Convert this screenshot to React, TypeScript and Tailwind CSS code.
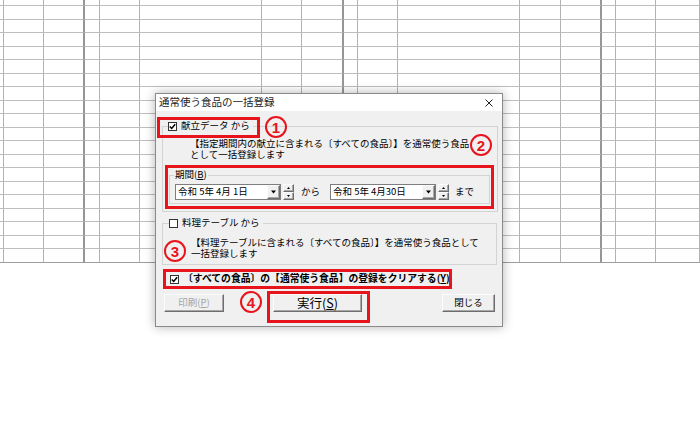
import React from "react";

// spreadsheet behind the dialog
const colCount = 16;
const thickCols = [2, 7, 12];
const rowCount = 20;

const raised =
  "bg-[#f0f0f0] border border-t-[#fbfbfb] border-l-[#fbfbfb] border-r-[#6d6d6d] border-b-[#6d6d6d] shadow-[inset_-1px_-1px_0_#a8a8a8]";

function Sheet() {
  const cells = [];
  for (let r = 0; r < rowCount; r++) {
    for (let c = 0; c < colCount; c++) {
      const side = thickCols.includes(c)
        ? "border-r-2 border-r-[#969696]"
        : "border-r border-r-[#b3b3b3]";
      const bottom =
        r === rowCount - 1 ? "border-b border-b-[#9c9c9c]" : "border-b border-b-[#bdbdbd]";
      cells.push(<div key={`${r}-${c}`} className={`${side} ${bottom}`} />);
    }
  }
  return (
    <div className="grid grid-cols-[4px_40px_41px_15px_40px_122px_40px_42px_14px_40px_122px_41px_41px_14px_40px_44px] grid-rows-[6px_repeat(9,14px_13px)_14px]">
      {cells}
    </div>
  );
}

function Check({ checked }: { checked?: boolean }) {
  return (
    <span className="inline-flex h-[9px] w-[9px] shrink-0 items-center justify-center border border-[#333333] bg-white">
      {checked && (
        <svg width="7" height="7" viewBox="0 0 7 7">
          <path d="M0.8 3.4 L2.7 5.4 L6.2 1.2" fill="none" stroke="#000" strokeWidth="1.5" />
        </svg>
      )}
    </span>
  );
}

function DateCombo({ value }: { value: string }) {
  return (
    <span className="flex items-center">
      <span className="flex h-[16px] w-[106px] items-center border border-[#7e7e7e] bg-white">
        <span className="flex-1 whitespace-nowrap pl-[2px]">{value}</span>
        <span className={`flex h-full w-[13px] items-center justify-center ${raised}`}>
          <svg width="5" height="4" viewBox="0 0 5 4">
            <path d="M0 0.5 H5 L2.5 3.5 Z" fill="#000" />
          </svg>
        </span>
      </span>
      <span className="ml-[2px] flex h-[16px] w-[11px] flex-col">
        <span className={`flex h-1/2 items-center justify-center ${raised}`}>
          <svg width="3" height="2" viewBox="0 0 3 2">
            <path d="M0 2 H3 L1.5 0 Z" fill="#000" />
          </svg>
        </span>
        <span className={`flex h-1/2 items-center justify-center ${raised}`}>
          <svg width="3" height="2" viewBox="0 0 3 2">
            <path d="M0 0 H3 L1.5 2 Z" fill="#000" />
          </svg>
        </span>
      </span>
    </span>
  );
}

function Badge({ n, className }: { n: string; className: string }) {
  return (
    <span
      className={`absolute flex h-[22px] w-[22px] items-center justify-center rounded-full border-2 border-[#e8141c] font-['Liberation_Sans',Arial,sans-serif] text-[15px] font-bold leading-none text-[#e8141c] ${className}`}
    >
      {n}
    </span>
  );
}

export default function App() {
  return (
    <div className="relative h-[426px] w-[700px] overflow-hidden bg-white font-['Noto_Sans_CJK_JP','Noto_Sans',sans-serif]">
      <Sheet />

      {/* dialog */}
      <div className="absolute left-[155px] top-[93px] flex h-[234px] w-[348px] flex-col border border-[#8a8a8a] bg-[#f0f0f0] text-[9.5px] leading-none text-black shadow-[0_0_10px_rgba(0,0,0,0.3)]">
        <div className="flex h-[17px] shrink-0 items-center justify-between bg-white pl-[3px] pr-[9px] text-[#222]">
          <span className="text-[10.5px]">通常使う食品の一括登録</span>
          <svg width="8" height="8" viewBox="0 0 8 8">
            <path d="M0.5 0.5 L7.5 7.5 M7.5 0.5 L0.5 7.5" stroke="#222" strokeWidth="1" />
          </svg>
        </div>

        <div className="flex flex-col px-[6px]">
          <fieldset className="mt-[9px] w-[336px] border border-[#d3d3d3] pb-[7px]">
            <legend className="ml-[5px] pr-[3px]">
              <span className="flex h-[12px] items-center gap-[4px]">
                <Check checked />
                献立データ から
              </span>
            </legend>
            <div className="mt-[6px] whitespace-nowrap pl-[27px] leading-[11px]">
              <div>【指定期間内の献立に含まれる〔すべての食品〕】を通常使う食品</div>
              <div>として一括登録します</div>
            </div>
            <fieldset className="ml-[6px] mt-[9px] w-[321px] border border-[#d3d3d3] pb-[3px]">
              <legend className="ml-[4px] px-[1px]">
                <span className="flex h-[12px] items-center">
                  期間(<u>B</u>)
                </span>
              </legend>
              <div className="mt-[3px] flex items-center pl-[5px]">
                <DateCombo value="令和 5年 4月 1日" />
                <span className="ml-[7px]">から</span>
                <span className="ml-[10px]">
                  <DateCombo value="令和 5年 4月30日" />
                </span>
                <span className="ml-[6px]">まで</span>
              </div>
            </fieldset>
          </fieldset>

          <fieldset className="mt-[5px] w-[335px] border border-[#d3d3d3] pb-[5px]">
            <legend className="ml-[6px] pr-[3px]">
              <span className="flex h-[12px] items-center gap-[4px]">
                <Check />
                料理テーブル から
              </span>
            </legend>
            <div className="mt-[8px] whitespace-nowrap pl-[28px] leading-[11px]">
              <div>【料理テーブルに含まれる〔すべての食品〕】を通常使う食品として</div>
              <div>一括登録します</div>
            </div>
          </fieldset>

          <div className="ml-[8px] mt-[8px] flex h-[12px] items-center gap-[4px] text-[9.8px] font-bold">
            <Check checked />
            <span className="whitespace-nowrap">
              〔すべての食品〕の【通常使う食品】の登録をクリアする(<u>Y</u>)
            </span>
          </div>

          <div className="mt-[9px] flex items-center">
            <button className={`ml-[2px] flex h-[18px] w-[60px] items-center justify-center text-[#a3a3a3] ${raised}`}>
              印刷(<u>P</u>)
            </button>
            <button className={`ml-[49px] flex h-[18px] w-[89px] items-center justify-center text-[12.5px] ${raised}`}>
              実行(<u>S</u>)
            </button>
            <button className={`ml-auto mr-[1px] flex h-[18px] w-[53px] items-center justify-center ${raised}`}>
              閉じる
            </button>
          </div>
        </div>
      </div>

      {/* annotations */}
      <div className="absolute left-[157px] top-[117px] h-[21px] w-[103px] border-[3px] border-[#e8141c]" />
      <div className="absolute left-[165px] top-[165px] h-[44px] w-[329px] border-[3px] border-[#e8141c]" />
      <div className="absolute left-[163px] top-[269px] h-[20px] w-[289px] border-[3px] border-[#e8141c]" />
      <div className="absolute left-[267px] top-[291px] h-[32px] w-[103px] border-[3px] border-[#e8141c]" />
      <Badge n="1" className="left-[265px] top-[116px]" />
      <Badge n="2" className="left-[470px] top-[134px]" />
      <Badge n="3" className="left-[164px] top-[240px]" />
      <Badge n="4" className="left-[240px] top-[291px]" />
    </div>
  );
}
